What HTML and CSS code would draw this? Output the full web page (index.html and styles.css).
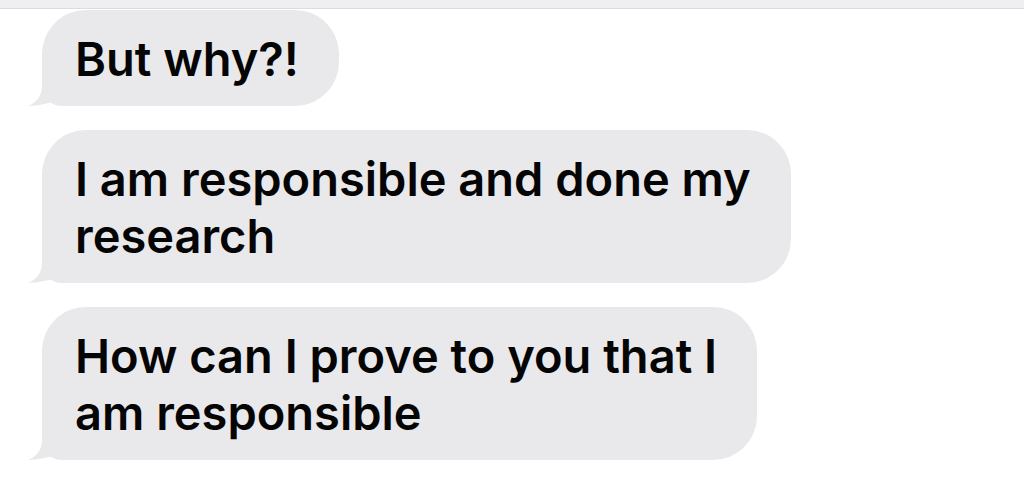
FILE: index.html
```html
<!DOCTYPE html>
<html lang="en">
<head>
    <title>Messages</title>
    <link rel="stylesheet" href="styles.css">
</head>
<body>
    <div class="top-bar"></div>
    <div class="thread">
        <div class="bubble">
            But why?!
            <svg class="tail" viewBox="0 0 42 40" width="42" height="40"><path d="M14 0 L14 20 C14 30 8 37 0 40 C10 40 20 37 29 35 C32 38 36 40 42 40 L42 0 Z"/></svg>
        </div>
        <div class="bubble">
            I am responsible and done my<br>research
            <svg class="tail" viewBox="0 0 42 40" width="42" height="40"><path d="M14 0 L14 20 C14 30 8 37 0 40 C10 40 20 37 29 35 C32 38 36 40 42 40 L42 0 Z"/></svg>
        </div>
        <div class="bubble">
            How can I prove to you that I<br>am responsible
            <svg class="tail" viewBox="0 0 42 40" width="42" height="40"><path d="M14 0 L14 20 C14 30 8 37 0 40 C10 40 20 37 29 35 C32 38 36 40 42 40 L42 0 Z"/></svg>
        </div>
    </div>
</body>
</html>
```

FILE: styles.css
```css
* {
    margin: 0;
    padding: 0;
    box-sizing: border-box;
}

body {
    background: #ffffff;
    font-family: 'Inter', 'Liberation Sans', sans-serif;
    overflow: hidden;
}

.top-bar {
    height: 9px;
    background: #efeff1;
    border-bottom: 1px solid #dcdcde;
}

.thread {
    display: flex;
    flex-direction: column;
    align-items: flex-start;
    gap: 24px;
    padding: 1px 0 0 42px;
}

.bubble {
    position: relative;
    padding: 20px 40px 19px 33px;
    background: #e9e9eb;
    border-radius: 44px;
    border-bottom-left-radius: 20px;
    color: #050505;
    font-size: 47px;
    font-weight: 600;
    line-height: 57px;
    white-space: nowrap;
}

.tail {
    position: absolute;
    left: -14px;
    bottom: 0;
    fill: #e9e9eb;
}
```
